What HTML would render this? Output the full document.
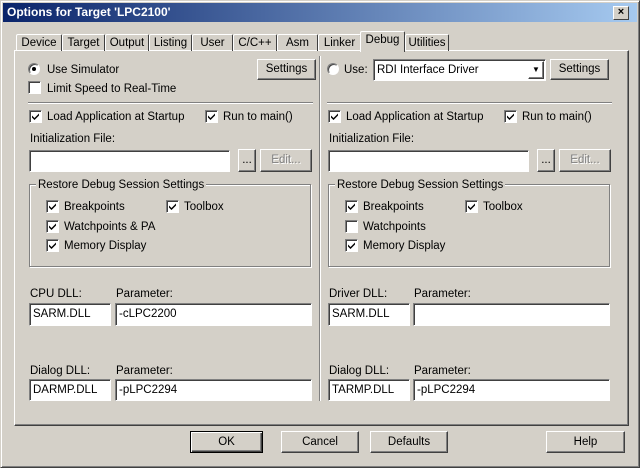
<!DOCTYPE html>
<html><head><style>
*{box-sizing:border-box;margin:0;padding:0}
body{width:640px;height:468px;background:#d4d0c8;font-family:"Liberation Sans",sans-serif;font-size:11px;color:#000;position:relative;overflow:hidden}
.a{position:absolute}
.win{left:0;top:0;width:640px;height:468px;border:1px solid;border-color:#d4d0c8 #404040 #404040 #d4d0c8;box-shadow:inset 1px 1px 0 #fff,inset -1px -1px 0 #808080}
.title{left:3px;top:3px;width:634px;height:19px;background:linear-gradient(to right,#0a246a,#a6caf0);color:#fff;font-weight:bold;font-size:12px;line-height:19px;padding-left:4px}
.close{left:613px;top:6px;width:16px;height:14px;background:#d4d0c8;border:1px solid;border-color:#fff #404040 #404040 #fff;color:#000;font-size:11px;font-weight:bold;text-align:center;line-height:11px}
.tab{top:34px;height:17px;border:1px solid;border-bottom:none;border-color:#fff #404040 #404040 #fff;line-height:16px;text-align:center;font-size:11.5px;border-radius:2px 2px 0 0}
.panel{left:14px;top:50px;width:615px;height:376px;border:1px solid;border-color:#fff #404040 #404040 #fff;box-shadow:inset -1px -1px 0 #808080}
.btn{border:1px solid;border-color:#fff #404040 #404040 #fff;box-shadow:inset -1px -1px 0 #808080;text-align:center;font-size:11.5px}
.inp{background:#fff;border:1px solid;border-color:#808080 #fff #fff #808080;box-shadow:inset 1px 1px 0 #404040;padding-left:3px;font-size:11.5px;line-height:20px}
.cb{width:13px;height:13px;background:#fff;border:1px solid;border-color:#808080 #fff #fff #808080;box-shadow:inset 1px 1px 0 #404040}
.cb svg{position:absolute;left:2px;top:2px}
.t{font-size:11.5px;white-space:nowrap;margin-top:2px}
.rad{width:12px;height:12px;border-radius:50%;background:#fff;border:1px solid;border-color:#808080 #fff #fff #808080;box-shadow:inset 1px 1px 0 #404040}
.grp{border:1px solid #808080;box-shadow:1px 1px 0 #fff,inset 1px 1px 0 #fff}
.hl{height:2px;border-top:1px solid #808080;border-bottom:1px solid #fff}
.vl{width:2px;border-left:1px solid #808080;border-right:1px solid #fff}
</style></head><body>
<svg width="0" height="0" style="position:absolute"><defs><symbol id="ck" viewBox="0 0 7 7"><path d="M0 2.5 L2.5 5 L7 0.5 V2.5 L2.5 7 L0 4.5Z" fill="#000"/></symbol></defs></svg>
<div class="a win"></div>
<div class="a title">Options for Target 'LPC2100'</div>
<div class="a close">×</div>

<div class="a panel"></div>
<div class="a tab" style="left:16px;width:46px">Device</div>
<div class="a tab" style="left:62px;width:43px">Target</div>
<div class="a tab" style="left:105px;width:44px">Output</div>
<div class="a tab" style="left:149px;width:43px">Listing</div>
<div class="a tab" style="left:192px;width:41px">User</div>
<div class="a tab" style="left:233px;width:44px">C/C++</div>
<div class="a tab" style="left:277px;width:41px">Asm</div>
<div class="a tab" style="left:318px;width:43px">Linker</div>
<div class="a tab" style="left:360px;width:45px;top:31px;height:21px;background:#d4d0c8;line-height:17px;z-index:2">Debug</div>
<div class="a tab" style="left:405px;width:44px">Utilities</div>

<div class="a vl" style="left:319px;top:56px;height:345px"></div>

<!-- Left -->
<div class="a rad" style="left:28px;top:63px"><div class="a" style="left:3px;top:3px;width:4px;height:4px;background:#000;border-radius:50%"></div></div>
<div class="a t" style="left:47px;top:62px">Use Simulator</div>
<div class="a btn" style="left:257px;top:59px;width:59px;height:21px;line-height:19px">Settings</div>
<div class="a cb" style="left:28px;top:81px"></div>
<div class="a t" style="left:47px;top:81px">Limit Speed to Real-Time</div>
<div class="a hl" style="left:28px;top:102px;width:285px"></div>

<div class="a cb" style="left:29px;top:110px"><svg width="7" height="7"><use href="#ck"/></svg></div>
<div class="a t" style="left:47px;top:109px">Load Application at Startup</div>
<div class="a cb" style="left:205px;top:110px"><svg width="7" height="7"><use href="#ck"/></svg></div>
<div class="a t" style="left:223px;top:109px">Run to main()</div>
<div class="a t" style="left:30px;top:131px">Initialization File:</div>
<div class="a inp" style="left:29px;top:150px;width:201px;height:22px"></div>
<div class="a btn" style="left:238px;top:149px;width:18px;height:23px;line-height:20px">...</div>
<div class="a btn" style="left:260px;top:149px;width:52px;height:23px;line-height:20px;color:#808080;text-shadow:1px 1px 0 #fff">Edit...</div>
<div class="a grp" style="left:29px;top:184px;width:282px;height:83px"></div>
<div class="a t" style="left:36px;top:177px;background:#d4d0c8;padding:0 2px">Restore Debug Session Settings</div>
<div class="a cb" style="left:46px;top:200px"><svg width="7" height="7"><use href="#ck"/></svg></div><div class="a t" style="left:64px;top:199px">Breakpoints</div>
<div class="a cb" style="left:166px;top:200px"><svg width="7" height="7"><use href="#ck"/></svg></div><div class="a t" style="left:184px;top:199px">Toolbox</div>
<div class="a cb" style="left:46px;top:220px"><svg width="7" height="7"><use href="#ck"/></svg></div><div class="a t" style="left:64px;top:219px">Watchpoints &amp; PA</div>
<div class="a cb" style="left:46px;top:239px"><svg width="7" height="7"><use href="#ck"/></svg></div><div class="a t" style="left:64px;top:238px">Memory Display</div>

<div class="a t" style="left:30px;top:286px">CPU DLL:</div>
<div class="a t" style="left:116px;top:286px">Parameter:</div>
<div class="a inp" style="left:29px;top:303px;width:82px;height:23px">SARM.DLL</div>
<div class="a inp" style="left:115px;top:303px;width:197px;height:23px">-cLPC2200</div>
<div class="a t" style="left:30px;top:363px">Dialog DLL:</div>
<div class="a t" style="left:116px;top:363px">Parameter:</div>
<div class="a inp" style="left:29px;top:379px;width:82px;height:22px">DARMP.DLL</div>
<div class="a inp" style="left:115px;top:379px;width:197px;height:22px">-pLPC2294</div>

<!-- Right -->
<div class="a rad" style="left:327px;top:63px"></div>
<div class="a t" style="left:344px;top:62px">Use:</div>
<div class="a inp" style="left:373px;top:59px;width:173px;height:22px">RDI Interface Driver</div>
<div class="a btn" style="left:528px;top:61px;width:16px;height:18px;font-size:8px;line-height:16px">▼</div>
<div class="a btn" style="left:550px;top:59px;width:59px;height:21px;line-height:19px">Settings</div>
<div class="a hl" style="left:327px;top:102px;width:285px"></div>

<div class="a cb" style="left:328px;top:110px"><svg width="7" height="7"><use href="#ck"/></svg></div>
<div class="a t" style="left:346px;top:109px">Load Application at Startup</div>
<div class="a cb" style="left:504px;top:110px"><svg width="7" height="7"><use href="#ck"/></svg></div>
<div class="a t" style="left:522px;top:109px">Run to main()</div>
<div class="a t" style="left:329px;top:131px">Initialization File:</div>
<div class="a inp" style="left:328px;top:150px;width:201px;height:22px"></div>
<div class="a btn" style="left:537px;top:149px;width:18px;height:23px;line-height:20px">...</div>
<div class="a btn" style="left:559px;top:149px;width:52px;height:23px;line-height:20px;color:#808080;text-shadow:1px 1px 0 #fff">Edit...</div>
<div class="a grp" style="left:328px;top:184px;width:282px;height:83px"></div>
<div class="a t" style="left:335px;top:177px;background:#d4d0c8;padding:0 2px">Restore Debug Session Settings</div>
<div class="a cb" style="left:345px;top:200px"><svg width="7" height="7"><use href="#ck"/></svg></div><div class="a t" style="left:363px;top:199px">Breakpoints</div>
<div class="a cb" style="left:465px;top:200px"><svg width="7" height="7"><use href="#ck"/></svg></div><div class="a t" style="left:483px;top:199px">Toolbox</div>
<div class="a cb" style="left:345px;top:220px"></div><div class="a t" style="left:363px;top:219px">Watchpoints</div>
<div class="a cb" style="left:345px;top:239px"><svg width="7" height="7"><use href="#ck"/></svg></div><div class="a t" style="left:363px;top:238px">Memory Display</div>

<div class="a t" style="left:329px;top:286px">Driver DLL:</div>
<div class="a t" style="left:414px;top:286px">Parameter:</div>
<div class="a inp" style="left:328px;top:303px;width:82px;height:23px">SARM.DLL</div>
<div class="a inp" style="left:413px;top:303px;width:197px;height:23px"></div>
<div class="a t" style="left:329px;top:363px">Dialog DLL:</div>
<div class="a t" style="left:414px;top:363px">Parameter:</div>
<div class="a inp" style="left:328px;top:379px;width:82px;height:22px">TARMP.DLL</div>
<div class="a inp" style="left:413px;top:379px;width:197px;height:22px">-pLPC2294</div>

<!-- Bottom buttons -->
<div class="a btn" style="left:190px;top:431px;width:73px;height:22px;line-height:20px;border-color:#000;box-shadow:inset 1px 1px 0 #fff,inset -1px -1px 0 #404040,inset -2px -2px 0 #808080">OK</div>
<div class="a btn" style="left:281px;top:431px;width:78px;height:22px;line-height:20px">Cancel</div>
<div class="a btn" style="left:370px;top:431px;width:78px;height:22px;line-height:20px">Defaults</div>
<div class="a btn" style="left:546px;top:431px;width:79px;height:22px;line-height:20px">Help</div>
</body></html>
